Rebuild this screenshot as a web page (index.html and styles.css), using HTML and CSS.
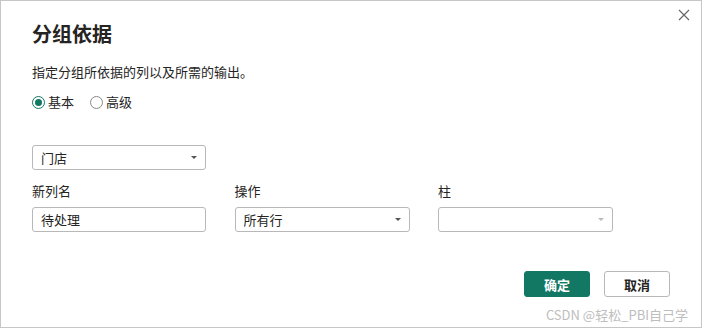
FILE: index.html
```html
<!DOCTYPE html>
<html lang="zh-CN">
<head>
    <meta charset="UTF-8">
    <title>分组依据</title>
    <link rel="stylesheet" href="styles.css">
</head>
<body>
    <div class="dialog">
        <button class="close" aria-label="关闭">
            <svg width="12" height="12" viewBox="0 0 12 12"><path d="M1 1L11 11M11 1L1 11" stroke="#666" stroke-width="1.2" fill="none"/></svg>
        </button>
        <h1>分组依据</h1>
        <p class="desc">指定分组所依据的列以及所需的输出。</p>
        <div class="radios">
            <label class="radio"><span class="dot checked"></span>基本</label>
            <label class="radio"><span class="dot"></span>高级</label>
        </div>
        <div class="select group-by"><span>门店</span><span class="caret"></span></div>
        <div class="fields">
            <div class="field">
                <div class="label">新列名</div>
                <div class="input">待处理</div>
            </div>
            <div class="field">
                <div class="label">操作</div>
                <div class="select"><span>所有行</span><span class="caret"></span></div>
            </div>
            <div class="field">
                <div class="label">柱</div>
                <div class="select"><span></span><span class="caret light"></span></div>
            </div>
        </div>
        <div class="actions">
            <button class="btn primary">确定</button>
            <button class="btn">取消</button>
        </div>
        <div class="watermark">CSDN @轻松_PBI自己学</div>
    </div>
</body>
</html>
```

FILE: styles.css
```css
body {
    margin: 0;
    font-family: "Noto Sans CJK SC", "Noto Sans", sans-serif;
    color: #252423;
    background: #fff;
}
.dialog {
    position: relative;
    width: 702px;
    height: 328px;
    box-sizing: border-box;
    border: 1px solid #c6c6c6;
    padding: 19px 31px 0 31px;
}
.close {
    position: absolute;
    top: 8px;
    right: 10px;
    width: 14px;
    height: 14px;
    padding: 0;
    border: none;
    background: none;
}
h1 {
    margin: 0;
    font-size: 20px;
    line-height: 28px;
    font-weight: 700;
}
.desc {
    margin: 14px 0 0;
    font-size: 13px;
    line-height: 20px;
}
.radios {
    display: flex;
    gap: 16px;
    margin-top: 10px;
    font-size: 13px;
    line-height: 20px;
}
.radio {
    display: flex;
    align-items: center;
    gap: 3px;
}
.dot {
    width: 13px;
    height: 13px;
    border: 1px solid #8a8886;
    border-radius: 50%;
    box-sizing: border-box;
    position: relative;
}
.dot.checked {
    border-color: #127863;
}
.dot.checked::after {
    content: "";
    position: absolute;
    left: 2px;
    top: 2px;
    width: 7px;
    height: 7px;
    border-radius: 50%;
    background: #127863;
}
.select, .input {
    height: 25px;
    box-sizing: border-box;
    border: 1px solid #b8b8b8;
    border-radius: 3px;
    padding: 0 8px;
    font-size: 13px;
    display: flex;
    align-items: center;
    justify-content: space-between;
}
.group-by {
    width: 174px;
    margin-top: 33px;
}
.caret {
    width: 0;
    height: 0;
    border-left: 3px solid transparent;
    border-right: 3px solid transparent;
    border-top: 3px solid #555;
}
.caret.light {
    border-top-color: #bbb;
}
.fields {
    display: grid;
    grid-template-columns: 174px 175px 175px;
    column-gap: 28.5px;
    margin-top: 12px;
}
.label {
    font-size: 13px;
    line-height: 18px;
    margin-bottom: 7px;
}
.actions {
    display: flex;
    justify-content: flex-end;
    gap: 14px;
    margin-top: 39px;
}
.btn {
    width: 66px;
    height: 26px;
    border: 1px solid #b8b8b8;
    border-radius: 3px;
    background: #fff;
    color: #252423;
    font-family: inherit;
    font-size: 13px;
    font-weight: 700;
    padding: 0;
}
.btn.primary {
    background: #127863;
    border-color: #127863;
    color: #fff;
}
.watermark {
    position: absolute;
    right: 13px;
    bottom: 3px;
    font-size: 13px;
    color: #bdbdbd;
}
```
